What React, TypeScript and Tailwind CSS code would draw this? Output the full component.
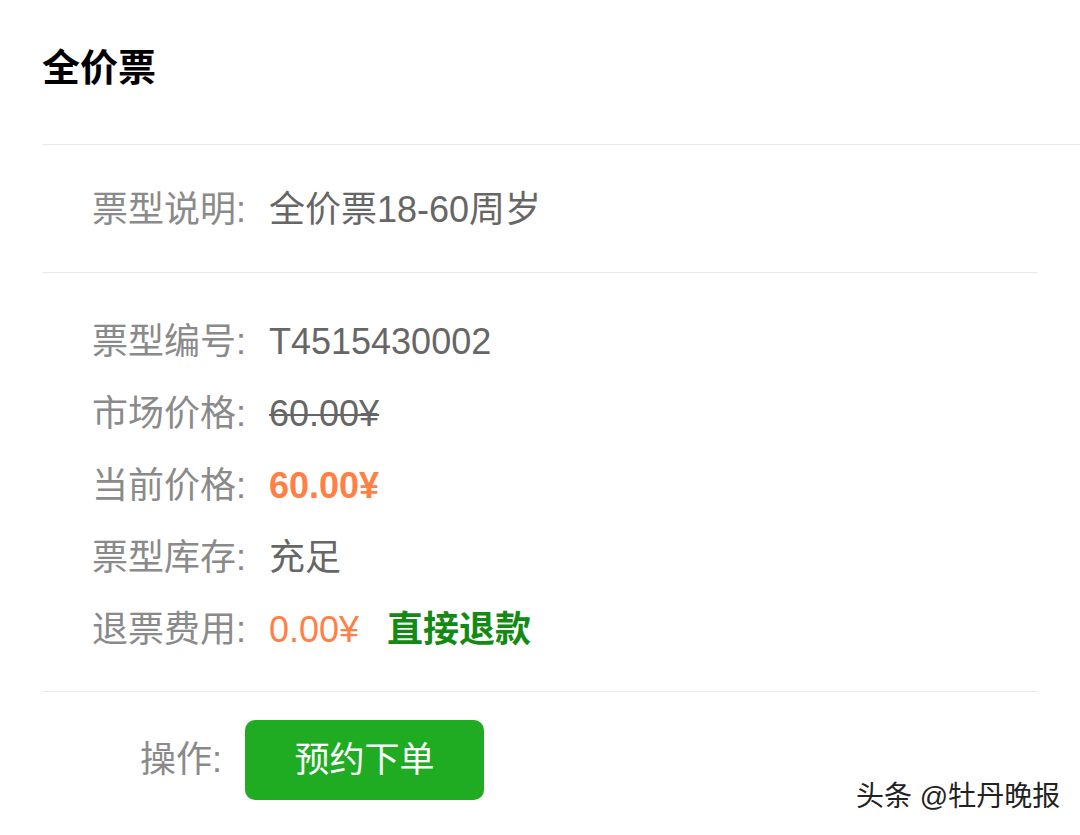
const font = { fontFamily: '"Liberation Sans", "Noto Sans CJK SC", sans-serif' };

interface Row {
  label: string;
  value: React.ReactNode;
}

const rows: Row[] = [
  { label: '票型编号:', value: <span className="text-[#666666]">T4515430002</span> },
  { label: '市场价格:', value: <span className="text-[#666666] line-through decoration-2">60.00¥</span> },
  { label: '当前价格:', value: <span className="text-[#ff7f45] font-bold">60.00¥</span> },
  { label: '票型库存:', value: <span className="text-[#666666]">充足</span> },
  {
    label: '退票费用:',
    value: (
      <span className="flex items-center">
        <span className="text-[#ff7f45]">0.00¥</span>
        <span className="ml-[28px] text-[#138a13] font-bold">直接退款</span>
      </span>
    ),
  },
];

export default function App() {
  return (
    <div className="relative w-[1080px] h-[835px] bg-white overflow-hidden" style={font}>
      {/* header */}
      <div className="ml-[42px] h-[145px] border-b border-[#e8e8e8] pt-[46px]">
        <h1 className="text-[38px] leading-[44px] font-bold text-black">全价票</h1>
      </div>

      <div className="ml-[42px] mr-[42px]">
        {/* description */}
        <div className="h-[128px] border-b border-[#e8e8e8] flex items-center pl-[50px] text-[36px] pt-[2px]">
          <span className="w-[177px] text-[#8a8a8a]">票型说明:</span>
          <span className="text-[#666666]">全价票18-60周岁</span>
        </div>

        {/* details */}
        <div className="border-b border-[#e8e8e8] pt-[33px] pb-[25px]">
          {rows.map((row) => (
            <div key={row.label} className="h-[72px] flex items-center pl-[50px] text-[36px]">
              <span className="w-[177px] text-[#8a8a8a]">{row.label}</span>
              {row.value}
            </div>
          ))}
        </div>

        {/* action */}
        <div className="flex items-center pt-[28px] pl-[98px]">
          <span className="w-[105px] text-[36px] text-[#8a8a8a]">操作:</span>
          <button className="w-[239px] h-[80px] rounded-[10px] bg-[#1fab22] text-white text-[35px] flex items-center justify-center">
            预约下单
          </button>
        </div>
      </div>

      {/* watermark */}
      <div
        className="absolute left-[856px] top-[780px] text-[28px] leading-[34px] text-[#222222]"
        style={{ textShadow: '1px 1px 0 #fff, -1px -1px 0 #fff, 1px -1px 0 #fff, -1px 1px 0 #fff' }}
      >
        头条 @牡丹晚报
      </div>
    </div>
  );
}
